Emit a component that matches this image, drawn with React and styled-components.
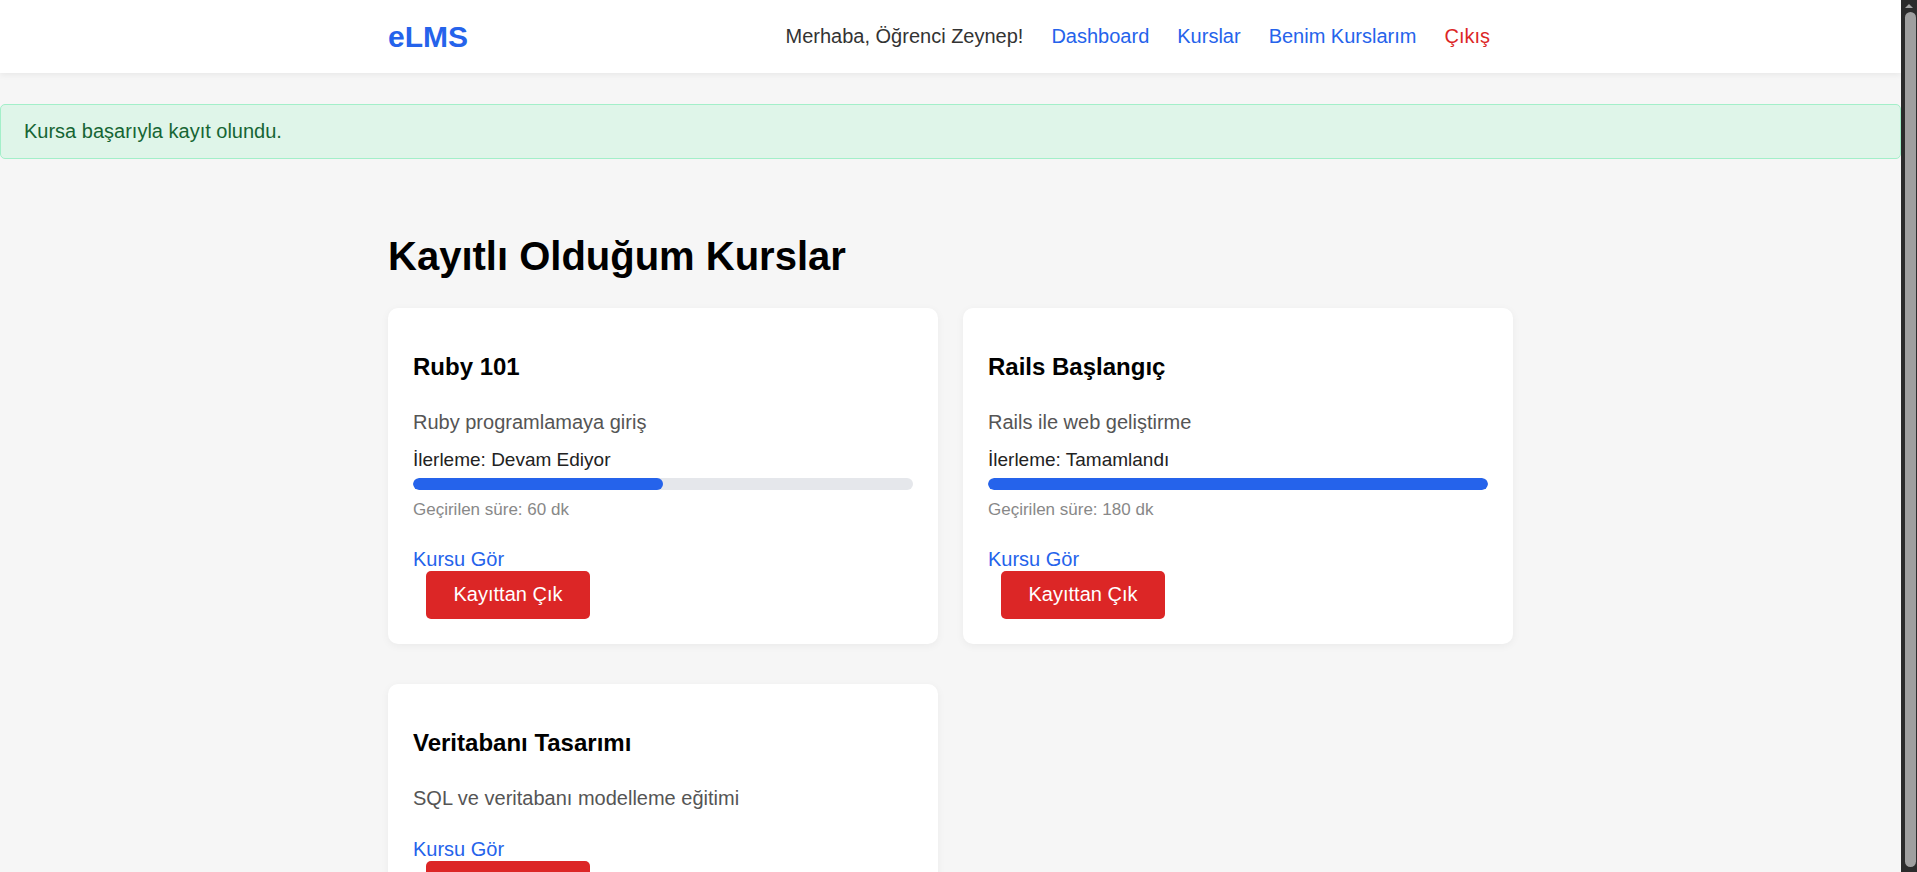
import React from 'react'
import styled, { createGlobalStyle } from 'styled-components'

const GlobalStyle = createGlobalStyle`
  * { box-sizing: border-box; }
  html, body {
    margin: 0;
    padding: 0;
    background: #f6f6f6;
    font-family: "Liberation Sans", Arial, sans-serif;
    color: #222;
  }
  body {
    margin-right: 16px;
  }
`

const courses = [
  {
    id: 1,
    title: 'Ruby 101',
    description: 'Ruby programlamaya giriş',
    progress: { status: 'Devam Ediyor', percent: 50, minutes: 60 },
  },
  {
    id: 2,
    title: 'Rails Başlangıç',
    description: 'Rails ile web geliştirme',
    progress: { status: 'Tamamlandı', percent: 100, minutes: 180 },
  },
  {
    id: 3,
    title: 'Veritabanı Tasarımı',
    description: 'SQL ve veritabanı modelleme eğitimi',
    progress: null,
  },
]

export default function App() {
  return (
    <>
      <GlobalStyle />
      <Header>
        <HeaderInner>
          <Logo href="#">eLMS</Logo>
          <Nav>
            <Greeting>Merhaba, Öğrenci Zeynep!</Greeting>
            <NavLink href="#">Dashboard</NavLink>
            <NavLink href="#">Kurslar</NavLink>
            <NavLink href="#">Benim Kurslarım</NavLink>
            <NavLink href="#" $danger>Çıkış</NavLink>
          </Nav>
        </HeaderInner>
      </Header>

      <Notice>Kursa başarıyla kayıt olundu.</Notice>

      <Main>
        <PageTitle>Kayıtlı Olduğum Kurslar</PageTitle>
        <CourseGrid>
          {courses.map((c) => (
            <Card key={c.id}>
              <CardTitle>{c.title}</CardTitle>
              <Description>{c.description}</Description>
              {c.progress && (
                <>
                  <ProgressLabel>İlerleme: {c.progress.status}</ProgressLabel>
                  <Track>
                    <Fill style={{ width: `${c.progress.percent}%` }} />
                  </Track>
                  <TimeSpent>Geçirilen süre: {c.progress.minutes} dk</TimeSpent>
                </>
              )}
              <Actions>
                <CourseLink href="#">Kursu Gör</CourseLink>
                <form onSubmit={(e) => e.preventDefault()}>
                  <DangerButton type="submit">Kayıttan Çık</DangerButton>
                </form>
              </Actions>
            </Card>
          ))}
        </CourseGrid>
      </Main>

      {/* browser scrollbar as seen in the screenshot */}
      <ScrollRail aria-hidden="true">
        <ScrollArrow />
        <ScrollThumb />
      </ScrollRail>
    </>
  )
}

const Header = styled.header`
  background: #fff;
  height: 73px;
  box-shadow: 0 2px 6px rgba(0, 0, 0, 0.06);
  display: flex;
  align-items: center;
`

const HeaderInner = styled.div`
  width: 1125px;
  margin: 0 auto;
  display: flex;
  align-items: center;
  justify-content: space-between;
`

const Logo = styled.a`
  font-size: 30px;
  font-weight: 700;
  color: #2563eb;
  text-decoration: none;
`

const Nav = styled.nav`
  display: flex;
  align-items: center;
  gap: 28px;
  padding-right: 23px;
  font-size: 20px;
`

const Greeting = styled.span`
  color: #333;
`

const NavLink = styled.a`
  color: ${(p) => (p.$danger ? '#dc2626' : '#2563eb')};
  text-decoration: none;
`

const Notice = styled.div`
  margin-top: 31px;
  padding: 15px 23px;
  line-height: 23px;
  font-size: 20px;
  color: #166534;
  background: #dff5e9;
  border: 1px solid #a3efc9;
  border-radius: 5px;
`

const Main = styled.main`
  width: 1125px;
  margin: 0 auto;
  padding-bottom: 40px;
`

const PageTitle = styled.h1`
  margin: 74px 0 29px;
  font-size: 40px;
  line-height: 46px;
  font-weight: 700;
  color: #000;
`

const CourseGrid = styled.div`
  display: grid;
  grid-template-columns: 1fr 1fr;
  column-gap: 25px;
  row-gap: 40px;
  align-items: start;
`

const Card = styled.div`
  background: #fff;
  border-radius: 10px;
  padding: 25px;
  box-shadow: 0 2px 8px rgba(0, 0, 0, 0.05);
`

const CardTitle = styled.h3`
  margin: 20px 0 0;
  font-size: 24px;
  line-height: 28px;
  font-weight: 700;
  color: #000;
`

const Description = styled.p`
  margin: 30px 0 0;
  font-size: 20px;
  line-height: 23px;
  color: #555;
`

const ProgressLabel = styled.p`
  margin: 14.5px 0 0;
  font-size: 19px;
  line-height: 22px;
  color: #222;
`

const Track = styled.div`
  margin-top: 7px;
  height: 12.5px;
  border-radius: 7px;
  background: #e5e7eb;
  overflow: hidden;
`

const Fill = styled.div`
  height: 100%;
  border-radius: 7px;
  background: #2563eb;
`

const TimeSpent = styled.p`
  margin: 9.5px 0 0;
  font-size: 17px;
  line-height: 20px;
  color: #888;
`

const Actions = styled.div`
  margin-top: 28px;
`

const CourseLink = styled.a`
  display: inline-block;
  font-size: 20px;
  line-height: 23px;
  color: #2563eb;
  text-decoration: none;
`

const DangerButton = styled.button`
  display: block;
  margin-left: 13px;
  padding: 12.5px 27.5px;
  font-family: inherit;
  font-size: 20px;
  line-height: 23px;
  color: #fff;
  background: #dc2626;
  border: none;
  border-radius: 5px;
  cursor: pointer;
`

const ScrollRail = styled.div`
  position: fixed;
  top: 0;
  right: 0;
  bottom: 0;
  width: 16px;
  background: #2b2b2b;
  display: flex;
  flex-direction: column;
  align-items: center;
  padding: 4px 1px 5px 4px;
  gap: 4px;
`

const ScrollArrow = styled.div`
  width: 0;
  height: 0;
  margin-left: -3px;
  border-left: 4px solid transparent;
  border-right: 4px solid transparent;
  border-bottom: 4px solid #a3a3a3;
`

const ScrollThumb = styled.div`
  flex: 1;
  width: 100%;
  border-radius: 6px;
  background: #9f9f9f;
`
